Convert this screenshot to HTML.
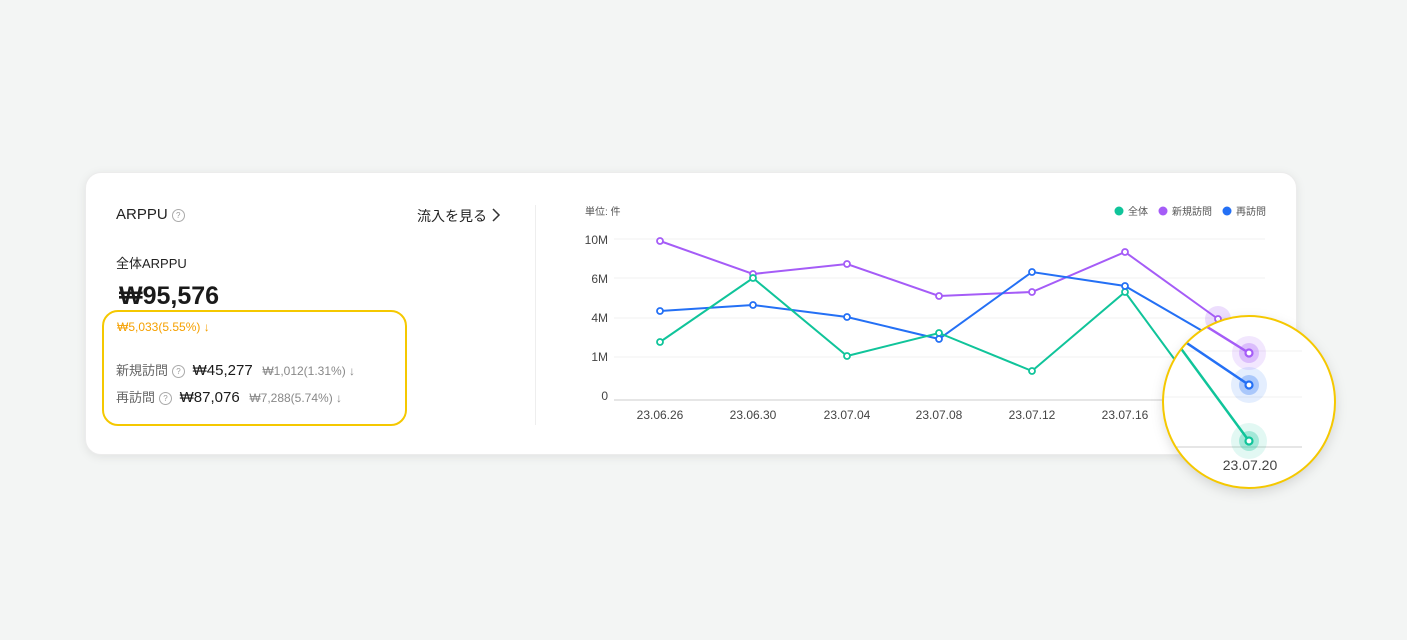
<!DOCTYPE html>
<html><head><meta charset="utf-8"><style>
body{margin:0;width:1407px;height:640px;background:#f3f5f4;font-family:"Liberation Sans","Noto Sans CJK JP",sans-serif;position:relative;overflow:hidden;color:#222}
.card{position:absolute;left:85px;top:172px;width:1212px;height:283px;background:#fff;border-radius:16px;box-shadow:0 2px 10px rgba(0,0,0,.08);border:1px solid #ececec;box-sizing:border-box}
.t{position:absolute;white-space:nowrap}
.q{display:inline-block;width:11px;height:11px;border:1px solid #aaa;border-radius:50%;font-size:8px;line-height:11px;text-align:center;color:#999;vertical-align:1px;margin-left:4px}
</style></head><body>
<div class="card"></div>
<div class="t" style="left:116px;top:206px;font-size:15px">ARPPU<span class="q">?</span></div>
<div class="t" style="left:417px;top:206px;font-size:14px">流入を見る</div>
<svg style="position:absolute;left:491px;top:208px" width="10" height="14"><path d="M2 1l6 6-6 6" fill="none" stroke="#333" stroke-width="1.5"/></svg>
<div class="t" style="left:116px;top:253px;font-size:13px">全体ARPPU</div>
<div class="t" style="left:119px;top:282px;font-size:25px;font-weight:bold;color:#1a1a1a">₩95,576</div>
<div style="position:absolute;left:102px;top:310px;width:301px;height:112px;border:2px solid #f5c800;border-radius:16px"></div>
<div class="t" style="left:117px;top:320px;font-size:12px;color:#f5a000">₩5,033(5.55%) ↓</div>
<div class="t" style="left:116px;top:360px;font-size:13px;color:#666">新規訪問<span class="q">?</span> <span style="color:#1a1a1a;font-size:15px;margin-left:4px">₩45,277</span> <span style="font-size:12px;color:#888;margin-left:6px">₩1,012(1.31%) ↓</span></div>
<div class="t" style="left:116px;top:387px;font-size:13px;color:#666">再訪問<span class="q">?</span> <span style="color:#1a1a1a;font-size:15px;margin-left:4px">₩87,076</span> <span style="font-size:12px;color:#888;margin-left:6px">₩7,288(5.74%) ↓</span></div>
<div style="position:absolute;left:535px;top:205px;width:1px;height:220px;background:#eee"></div>
<svg style="position:absolute;left:0;top:0" width="1407" height="640" font-family="Liberation Sans,Noto Sans CJK JP,sans-serif">
<text x="585" y="215" font-size="10" fill="#555">単位: 件</text>
<circle cx="1119" cy="211" r="4.5" fill="#10c49a"/><text x="1128" y="215" font-size="10" fill="#555">全体</text>
<circle cx="1163" cy="211" r="4.5" fill="#a55cf7"/><text x="1172" y="215" font-size="10" fill="#555">新規訪問</text>
<circle cx="1227" cy="211" r="4.5" fill="#2470f5"/><text x="1236" y="215" font-size="10" fill="#555">再訪問</text>
<g stroke="#f2f2f2"><line x1="614" x2="1265" y1="239" y2="239"/><line x1="614" x2="1265" y1="278" y2="278"/><line x1="614" x2="1265" y1="318" y2="318"/><line x1="614" x2="1265" y1="357" y2="357"/></g>
<line x1="614" x2="1265" y1="400" y2="400" stroke="#ccc"/>
<g font-size="12" fill="#444" text-anchor="end"><text x="608" y="244">10M</text><text x="608" y="283">6M</text><text x="608" y="322">4M</text><text x="608" y="361">1M</text><text x="608" y="400">0</text></g>
<g font-size="12" fill="#444" text-anchor="middle"><text x="660" y="419">23.06.26</text><text x="753" y="419">23.06.30</text><text x="847" y="419">23.07.04</text><text x="939" y="419">23.07.08</text><text x="1032" y="419">23.07.12</text><text x="1125" y="419">23.07.16</text></g>
<g fill="none" stroke-width="2">
<polyline stroke="#a55cf7" points="660,241 753,274 847,264 939,296 1032,292 1125,252 1218,319"/>
<polyline stroke="#2470f5" points="660,311 753,305 847,317 939,339 1032,272 1125,286 1218,340"/>
<polyline stroke="#10c49a" points="660,342 753,278 847,356 939,333 1032,371 1125,292 1175,360"/>
</g>
<circle cx="1218" cy="319" r="13" fill="#a55cf7" opacity=".2"/>
<g fill="#fff" stroke-width="1.8">
<g stroke="#a55cf7"><circle cx="660" cy="241" r="3"/><circle cx="753" cy="274" r="3"/><circle cx="847" cy="264" r="3"/><circle cx="939" cy="296" r="3"/><circle cx="1032" cy="292" r="3"/><circle cx="1125" cy="252" r="3"/><circle cx="1218" cy="319" r="3"/></g>
<g stroke="#10c49a"><circle cx="660" cy="342" r="3"/><circle cx="753" cy="278" r="3"/><circle cx="847" cy="356" r="3"/><circle cx="939" cy="333" r="3"/><circle cx="1032" cy="371" r="3"/><circle cx="1125" cy="292" r="3"/></g>
<g stroke="#2470f5"><circle cx="660" cy="311" r="3"/><circle cx="753" cy="305" r="3"/><circle cx="847" cy="317" r="3"/><circle cx="939" cy="339" r="3"/><circle cx="1032" cy="272" r="3"/><circle cx="1125" cy="286" r="3"/></g>
</g>
<defs><clipPath id="c"><circle cx="1249" cy="402" r="86"/></clipPath><filter id="s"><feDropShadow dx="0" dy="4" stdDeviation="6" flood-opacity=".15"/></filter></defs>
<circle cx="1249" cy="402" r="86" fill="#fff" filter="url(#s)"/>
<g clip-path="url(#c)">
<line x1="1160" x2="1302" y1="351" y2="351" stroke="#f0f0f0"/><line x1="1160" x2="1302" y1="397" y2="397" stroke="#f0f0f0"/>
<line x1="1175" x2="1302" y1="447" y2="447" stroke="#ccc"/>
<g fill="none" stroke-width="2.5">
<line x1="1180" y1="310" x2="1249" y2="353" stroke="#a55cf7"/>
<line x1="1160" y1="325" x2="1249" y2="385" stroke="#2470f5"/>
<line x1="1160" y1="320" x2="1249" y2="441" stroke="#10c49a"/>
</g>
<circle cx="1249" cy="353" r="17" fill="#a55cf7" opacity=".15"/><circle cx="1249" cy="353" r="10" fill="#a55cf7" opacity=".3"/>
<circle cx="1249" cy="385" r="18" fill="#2470f5" opacity=".12"/><circle cx="1249" cy="385" r="10" fill="#2470f5" opacity=".3"/>
<circle cx="1249" cy="441" r="18" fill="#10c49a" opacity=".12"/><circle cx="1249" cy="441" r="10" fill="#10c49a" opacity=".3"/>
<g fill="#fff" stroke-width="2.2"><circle cx="1249" cy="353" r="3.5" stroke="#a55cf7"/><circle cx="1249" cy="385" r="3.5" stroke="#2470f5"/><circle cx="1249" cy="441" r="3.5" stroke="#10c49a"/></g>
<text x="1250" y="470" font-size="14" fill="#444" text-anchor="middle">23.07.20</text>
</g>
<circle cx="1249" cy="402" r="86" fill="none" stroke="#f5c800" stroke-width="2"/>
</svg>
</body></html>
